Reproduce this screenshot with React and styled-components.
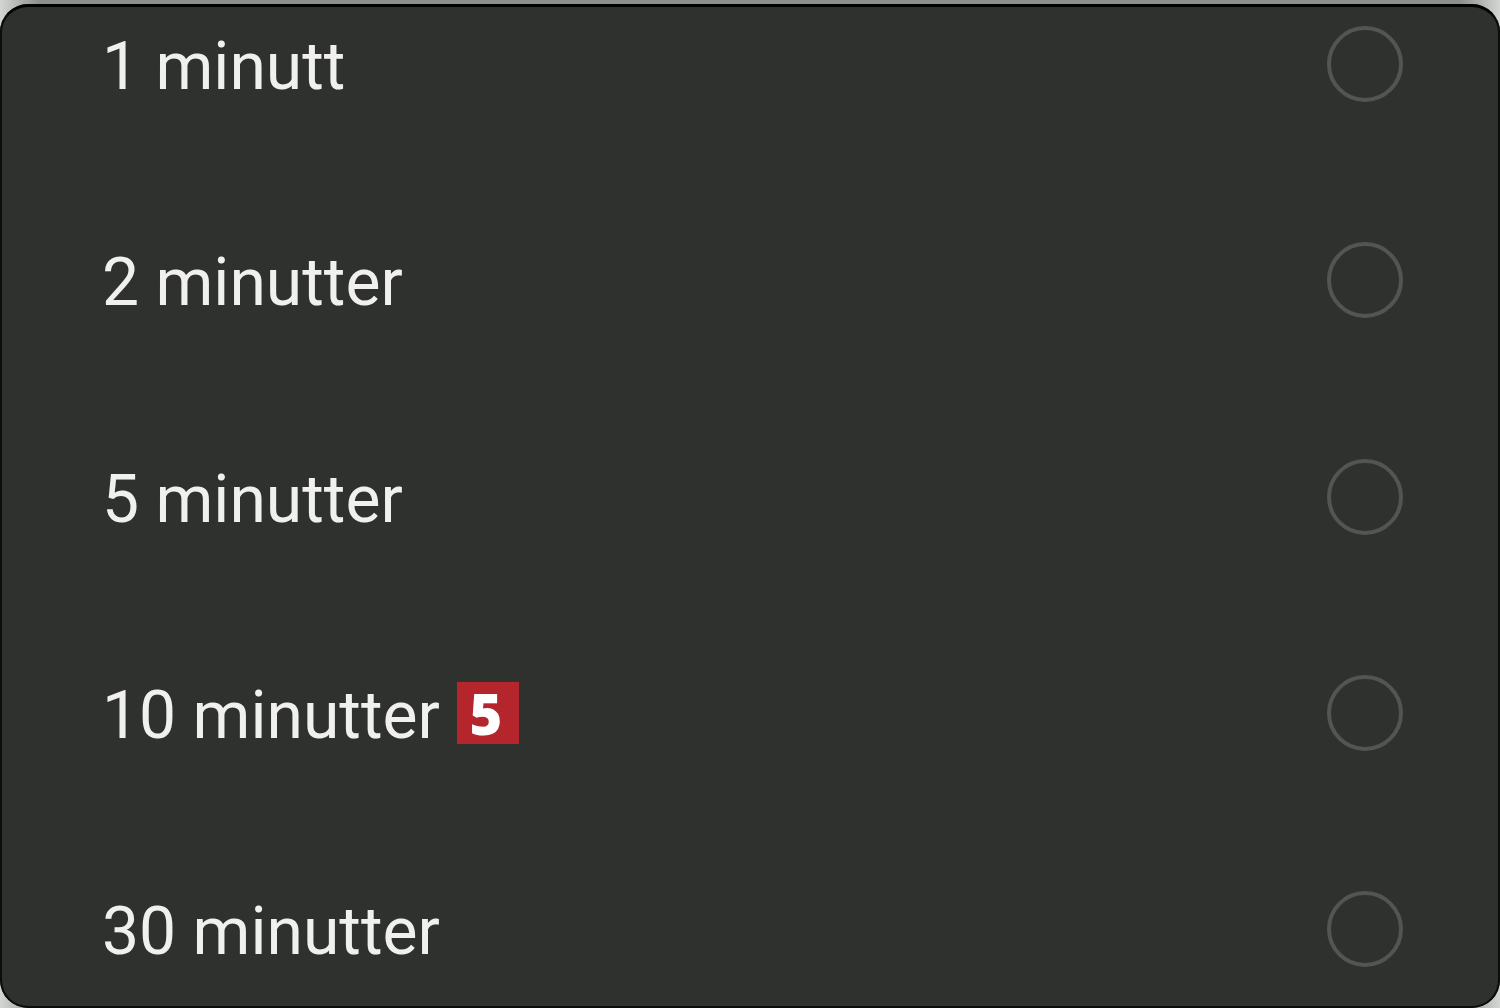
// NPM
import React, { useState } from 'react';
import styled, { createGlobalStyle } from 'styled-components';

// STYLES
const GlobalStyle = createGlobalStyle`
  * {
    box-sizing: border-box;
  }

  body {
    margin: 0;
    background: linear-gradient(
      to right,
      #d4d6d4 0,
      #8c8f8c 40px,
      #8c8f8c calc(100% - 40px),
      #d4d6d4 100%
    );
    font-family: Roboto, sans-serif;
  }
`;

const Page = styled.main`
  display: flex;
  min-height: 100vh;
  padding-top: 4px;
`;

const Options = styled.fieldset`
  flex: 1;
  min-width: 0;
  margin: 0;
  padding: 19px 95px 39px 100px;
  display: flex;
  flex-direction: column;
  justify-content: space-between;
  background: #2f312e;
  border: 2px solid #0b0c0b;
  border-top: 3px solid #000;
  border-radius: 28px;
`;

const Option = styled.label`
  display: flex;
  align-items: center;
  justify-content: space-between;
  color: #f0f0ee;
  font-size: 66px;
  line-height: 70px;
  cursor: pointer;
`;

const OptionText = styled.span`
  display: flex;
  align-items: center;
  gap: 17px;
`;

const OptionName = styled.span`
  padding-top: 6px;
`;

const Badge = styled.span`
  width: 62px;
  height: 62px;
  padding-right: 4px;
  background: #b5262c;
  color: #fff;
  font-family: 'Open Sans', sans-serif;
  font-size: 56px;
  font-weight: 800;
  line-height: 62px;
  text-align: center;
`;

const Radio = styled.input`
  appearance: none;
  flex: none;
  width: 76px;
  height: 76px;
  margin: 0;
  border: 4px solid #525552;
  border-radius: 50%;
  cursor: pointer;

  &:checked {
    border-width: 22px;
    border-color: #f0f0ee;
  }
`;

const options = [
  { value: '1', label: '1 minutt' },
  { value: '2', label: '2 minutter' },
  { value: '5', label: '5 minutter' },
  { value: '10', label: '10 minutter', badge: '5' },
  { value: '30', label: '30 minutter' }
];

// MODULE
const App = () => {
  const [selected, setSelected] = useState(null);

  return (
    <Page>
      <GlobalStyle />
      <Options>
        {options.map(({ value, label, badge }) => (
          <Option key={value}>
            <OptionText>
              <OptionName>{label}</OptionName>
              {badge && <Badge>{badge}</Badge>}
            </OptionText>
            <Radio
              type="radio"
              name="minutes"
              value={value}
              checked={selected === value}
              onChange={() => setSelected(value)}
            />
          </Option>
        ))}
      </Options>
    </Page>
  );
};

export default App;
